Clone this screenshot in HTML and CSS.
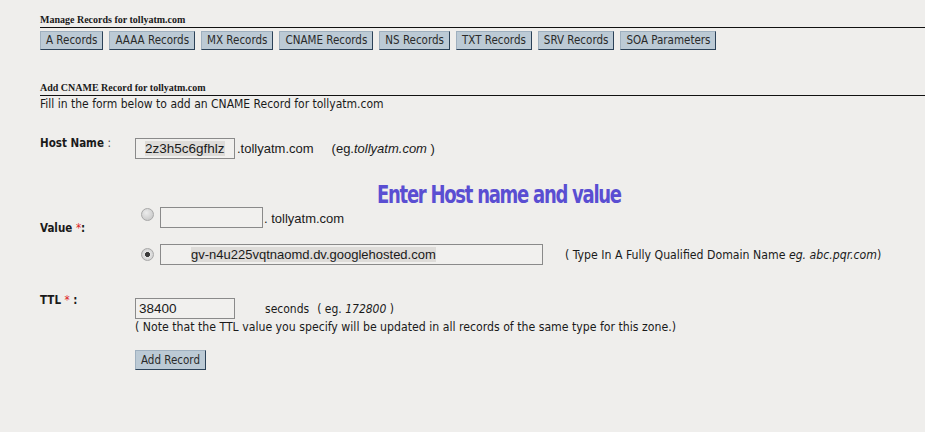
FILE: index.html
```html
<!DOCTYPE html>
<html>
<head>
<meta charset="utf-8">
<link rel="stylesheet" href="styles.css">
</head>
<body>
<div class="page">
  <div class="section-title first">Manage Records for tollyatm.com</div>
  <div class="tabs">
    <button class="btn">A Records</button>
    <button class="btn">AAAA Records</button>
    <button class="btn">MX Records</button>
    <button class="btn">CNAME Records</button>
    <button class="btn">NS Records</button>
    <button class="btn">TXT Records</button>
    <button class="btn">SRV Records</button>
    <button class="btn">SOA Parameters</button>
  </div>

  <div class="section-title second">Add CNAME Record for tollyatm.com</div>
  <div class="intro">Fill in the form below to add an CNAME Record for tollyatm.com</div>

  <div class="row host-row">
    <div class="label">Host Name <span class="colon">:</span></div>
    <div class="field">
      <div class="box host-box"><span class="hl">2z3h5c6gfhlz</span></div>
      <span class="suffix">.tollyatm.com</span>
      <span class="eg">(eg.<i>tollyatm.com</i> )</span>
    </div>
  </div>

  <div class="callout">Enter Host name and value</div>

  <div class="row value-row">
    <div class="label value-label">Value <span class="req">*</span>:</div>
    <div class="value-options">
      <div class="opt">
        <span class="radio"></span>
        <div class="box small-box"></div>
        <span class="suffix2">. tollyatm.com</span>
      </div>
      <div class="opt opt2">
        <span class="radio checked"></span>
        <div class="box long-box"><span class="hl">gv-n4u225vqtnaomd.dv.googlehosted.com</span></div>
        <span class="hint">( Type In A Fully Qualified Domain Name <i>eg. abc.pqr.com</i>)</span>
      </div>
    </div>
  </div>

  <div class="row ttl-row">
    <div class="label">TTL <span class="req">*</span> :</div>
    <div class="ttl-field">
      <div class="ttl-line">
        <div class="box ttl-box">38400</div>
        <span class="secs">seconds</span>
        <span class="eg2">( eg. <i>172800</i> )</span>
      </div>
      <div class="note">( Note that the TTL value you specify will be updated in all records of the same type for this zone.)</div>
      <button class="btn add">Add Record</button>
    </div>
  </div>
</div>
</body>
</html>
```

FILE: styles.css
```css
html, body {
  margin: 0;
  padding: 0;
  background: #efeeec;
  color: #1a1a1a;
  font-family: "DejaVu Sans Condensed", "DejaVu Sans", sans-serif;
}
.page {
  padding: 14px 0 0 40px;
  width: 885px;
}
.section-title {
  font-family: "Liberation Serif", "Times New Roman", serif;
  font-weight: bold;
  font-size: 10px;
  line-height: 12px;
  border-bottom: 1px solid #111;
  padding-bottom: 1px;
}
.tabs {
  display: flex;
  gap: 6px;
  margin-top: 3px;
}
.btn {
  font-family: "DejaVu Sans Condensed", "DejaVu Sans", sans-serif;
  font-size: 11.5px;
  color: #2a2a2a;
  background: #bccad5;
  border: 1px solid #9fb0bf;
  border-right-color: #2c4258;
  border-bottom-color: #2c4258;
  height: 19px;
  padding: 0 5px;
  line-height: 17px;
  margin: 0;
}
.section-title.second {
  margin-top: 32px;
}
.intro {
  font-size: 12px;
  line-height: 14px;
  margin-top: 1px;
}
.row {
  display: flex;
}
.label {
  width: 95px;
  flex: none;
  font-weight: bold;
  font-size: 11.5px;
}
.colon {
  color: #444;
  font-weight: normal;
}
.req {
  color: #d22;
  font-weight: normal;
}
.host-row {
  margin-top: 25px;
  align-items: flex-start;
}
.host-row .label {
  line-height: 14px;
}
.field {
  display: flex;
  align-items: center;
  margin-top: 2px;
  font-family: "Liberation Sans", Arial, sans-serif;
  font-size: 13px;
}
.box {
  box-sizing: border-box;
  border: 1px solid #8a8a8a;
  background: #f1f0ee;
  height: 21px;
  display: flex;
  align-items: center;
  font-family: "Liberation Sans", Arial, sans-serif;
  font-size: 13px;
}
.host-box {
  width: 100px;
  padding-left: 9px;
  font-size: 13.5px;
}
.hl {
  background: #dedcd9;
}
.suffix {
  margin-left: 2px;
}
.eg {
  margin-left: 18px;
}
.callout {
  margin: 23px 0 0 337px;
  font-family: "DejaVu Sans Condensed", "Liberation Sans Narrow", sans-serif;
  font-weight: bold;
  font-size: 22px;
  line-height: 26px;
  color: #5a4ed2;
  letter-spacing: -1.4px;
  transform: scale(0.91, 1.12);
  transform-origin: left center;
  width: max-content;
}
.value-row {
  margin-top: -1px;
  align-items: flex-start;
}
.value-label {
  margin-top: 14px;
  font-size: 11.5px;
}
.value-options {
  display: flex;
  flex-direction: column;
  gap: 16px;
  margin-left: 6px;
}
.opt {
  display: flex;
  align-items: center;
  font-family: "Liberation Sans", Arial, sans-serif;
  font-size: 13px;
}
.radio {
  box-sizing: border-box;
  width: 13px;
  height: 13px;
  border-radius: 50%;
  border: 1px solid #a8a8a8;
  background: radial-gradient(circle at 40% 35%, #ececec, #c0c0c0);
  margin-right: 6px;
  margin-top: -6px;
}
.radio.checked {
  background: radial-gradient(circle, #3a3a3a 0 2.2px, #e4e4e4 2.8px, #c4c4c4 100%);
  margin-top: 0;
}
.small-box {
  width: 103px;
}
.suffix2 {
  margin-left: 1px;
  margin-top: 1px;
}
.long-box {
  width: 383px;
  padding-left: 30px;
}
.hint {
  margin-left: 22px;
  font-family: "DejaVu Sans Condensed", sans-serif;
  font-size: 12.2px;
}
.ttl-row {
  margin-top: 33px;
  align-items: flex-start;
}
.ttl-row .label {
  margin-top: -5px;
  line-height: 14px;
}
.ttl-field {
  display: flex;
  flex-direction: column;
  align-items: flex-start;
}
.ttl-line {
  display: flex;
  align-items: center;
  font-family: "DejaVu Sans Condensed", sans-serif;
  font-size: 12px;
}
.ttl-box {
  width: 100px;
  padding-left: 3px;
  font-size: 13.5px;
}
.secs {
  margin-left: 30px;
}
.eg2 {
  margin-left: 8px;
}
.note {
  font-family: "DejaVu Sans Condensed", sans-serif;
  font-size: 12.2px;
  line-height: 14px;
  margin-top: 1px;
}
.btn.add {
  margin-top: 16px;
  height: 20px;
  padding: 0 5px;
}
```
